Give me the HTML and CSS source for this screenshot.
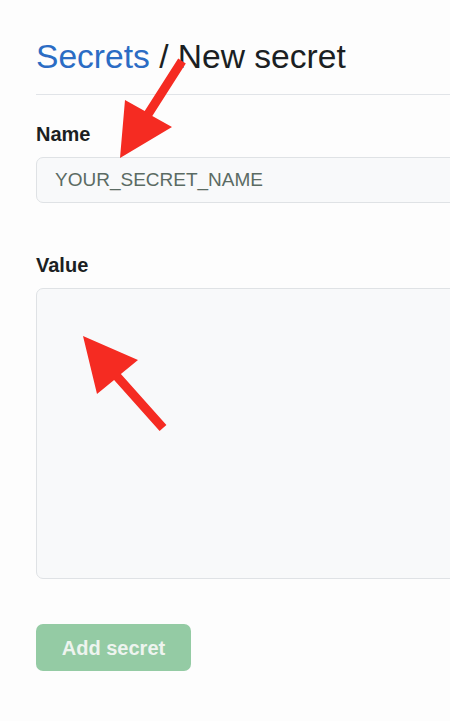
FILE: index.html
```html
<!DOCTYPE html>
<html>
<head>
<meta charset="utf-8">
<link rel="stylesheet" href="styles.css">
</head>
<body>
<div class="page">
  <h1 class="title"><a class="crumb" href="#">Secrets</a> / New secret</h1>
  <form class="form">
    <label class="label" for="name">Name</label>
    <input class="field" id="name" type="text" placeholder="YOUR_SECRET_NAME">
    <label class="label label-value" for="value">Value</label>
    <textarea class="field area" id="value"></textarea>
    <button class="btn" type="button" disabled>Add secret</button>
  </form>
</div>
<svg class="overlay" width="450" height="721" viewBox="0 0 450 721">
  <polygon fill="#f52b22" points="178.2,58.6 185.8,63.4 152.3,115.9 172,127 120,158 125,100 144.7,111.1"/>
  <polygon fill="#f52b22" points="83,336 138,360 120.9,374 166.4,425 159.6,431 114.1,380 97,394"/>
</svg>
</body>
</html>
```
FILE: styles.css
```css
html, body {
  margin: 0;
  padding: 0;
  overflow: hidden;
  background: #fdfdfd;
}
body {
  position: relative;
  width: 450px;
  height: 721px;
  font-family: "Liberation Sans", Arial, sans-serif;
  color: #1b1f23;
}
.page {
  width: 560px;
  padding-left: 36px;
  padding-top: 37px;
}
.title {
  margin: 0;
  font-size: 33.6px;
  line-height: 40px;
  font-weight: 400;
  padding-bottom: 17px;
  border-bottom: 1px solid #e1e4e8;
}
.crumb {
  color: #2b6cc4;
  text-decoration: none;
}
.form {
  display: flex;
  flex-direction: column;
  align-items: flex-start;
  padding-top: 27px;
}
.label {
  font-size: 20px;
  line-height: 24px;
  font-weight: 700;
  color: #1b1f23;
  margin-bottom: 11px;
}
.label-value {
  margin-top: 50px;
  margin-bottom: 11px;
}
.field {
  box-sizing: border-box;
  width: 100%;
  height: 46px;
  margin: 0;
  padding: 0 18px;
  border: 1px solid #dfe2e5;
  border-radius: 7px;
  background: #f8f9fa;
  font-family: "Liberation Sans", Arial, sans-serif;
  font-size: 19px;
  color: #24292e;
  outline: none;
}
.field::placeholder {
  color: #5b6b63;
}
.area {
  height: 291px;
  resize: none;
  padding: 12px 18px;
}
.btn {
  margin-top: 45px;
  width: 155px;
  height: 47px;
  border: none;
  border-radius: 7px;
  background: #94cba4;
  color: #eef4ef;
  font-family: "Liberation Sans", Arial, sans-serif;
  font-size: 20px;
  font-weight: 700;
  line-height: 24px;
  padding: 0;
}
.overlay {
  position: absolute;
  left: 0;
  top: 0;
  pointer-events: none;
}
```
